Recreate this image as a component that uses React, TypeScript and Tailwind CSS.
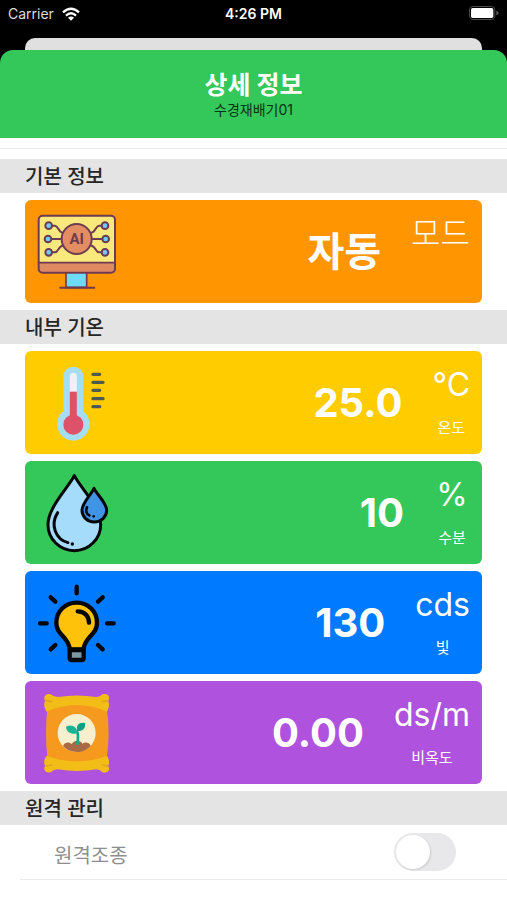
import type { ReactNode } from "react";

const AiMonitorIcon = () => (
  <svg viewBox="51 50 240 240" className="size-20 shrink-0" aria-hidden="true" strokeLinecap="round" strokeLinejoin="round">
    <rect x="138" y="230" width="62" height="46" fill="#6fdcf7" stroke="#6d3b52" strokeWidth="5" />
    <path d="M121 277h102" stroke="#6d3b52" strokeWidth="6" />
    <rect x="56" y="61" width="229" height="171" rx="12" fill="#f9e97d" />
    <path d="M56 202h229v18a12 12 0 0 1-12 12H68a12 12 0 0 1-12-12z" fill="#e08a63" />
    <path d="M56 202h229" stroke="#6d3b52" strokeWidth="5" />
    <rect x="56" y="61" width="229" height="171" rx="12" fill="none" stroke="#6d3b52" strokeWidth="6" />
    <g fill="none" stroke="#6d3b52" strokeWidth="6">
      <path d="M97 91h8c10 0 10 20 23 21M97 131h28M97 171h8c10 0 10-19 23-20" />
      <path d="M245 91h-8c-10 0-10 20-23 21M245 131h-28M245 171h-8c-10 0-10-19-23-20" />
    </g>
    <circle cx="170" cy="131" r="45" fill="#e58d62" stroke="#6d3b52" strokeWidth="6" />
    <g fill="#6fcdf3" stroke="#6d3b52" strokeWidth="6">
      <circle cx="86" cy="91" r="10" />
      <circle cx="84" cy="131" r="10" />
      <circle cx="86" cy="171" r="10" />
      <circle cx="255" cy="91" r="10" />
      <circle cx="257" cy="131" r="10" />
      <circle cx="255" cy="171" r="10" />
    </g>
    <text x="170" y="146" textAnchor="middle" fontFamily="Roboto, sans-serif" fontSize="45" fontWeight="700" fill="#6d3b52">AI</text>
  </svg>
);

const ThermometerIcon = () => (
  <svg viewBox="51 52 240 240" className="size-20 shrink-0" aria-hidden="true" strokeLinecap="round">
    <path d="M130 93a30 30 0 0 1 60 0v104a49 49 0 1 1-60 0z" fill="#a5def2" />
    <path d="M160 92v50" stroke="#f2f0f7" strokeWidth="21" />
    <path d="M149.500 138h21v75h-21z" fill="#dd5268" />
    <circle cx="160" cy="237" r="30" fill="#dd5268" />
    <path d="M219 86h20M219 110h30M219 134h20M219 159h30M219 183h20" stroke="#4f5a50" strokeWidth="10" />
  </svg>
);

const DropsIcon = () => (
  <svg viewBox="51 47 240 240" className="size-20 shrink-0" aria-hidden="true" strokeLinecap="round" strokeLinejoin="round" stroke="#050608">
    <path d="M163 55C145 91 84 150 84 202a79 78 0 0 0 158 0C242 150 181 91 163 55z" fill="#a6dcfb" strokeWidth="9" />
    <path d="M113 166c-24 38-5 80 31 90" fill="none" strokeWidth="9" />
    <circle cx="157" cy="260" r="5" fill="#050608" stroke="none" />
    <path d="M222 93c-8 18-36 43-36 66a37 35 0 0 0 74 0c0-23-30-48-38-66z" fill="#3f94e6" strokeWidth="9" />
    <path d="M201 150c-5 11-1 20 7 24" fill="none" strokeWidth="8" />
    <circle cx="221" cy="177" r="4" fill="#050608" stroke="none" />
  </svg>
);

const BulbIcon = () => (
  <svg viewBox="51 46 240 240" className="size-20 shrink-0" aria-hidden="true" strokeLinecap="round" strokeLinejoin="round" stroke="#050608">
    <path d="M170 57v20M92 89l14 13M248 89l-14 13M60 167h20M261 167h20M92 245l14-13M248 245l-14-13" strokeWidth="13" fill="none" />
    <path d="M170 105c-35 0-61 27-61 60 0 39 38 42 40 80h42c2-38 40-41 40-80 0-33-26-60-61-60z" fill="#ffc20a" strokeWidth="13" />
    <path d="M149 247h42v24q0 6-6 6h-30q-6 0-6-6z" fill="#7d979e" strokeWidth="13" />
    <path d="M173 131c22 0 34 16 34 34" fill="none" strokeWidth="13" />
  </svg>
);

const SoilBagIcon = () => (
  <svg viewBox="51 46 240 240" className="size-20 shrink-0" aria-hidden="true" strokeLinecap="round" strokeLinejoin="round">
    <path d="M83 85q88-34 176 0 14 82 0 165-88 30-176 0-10-83 0-165z" fill="#f6991f" />
    <path d="M92 50c-14-4-24 8-17 19-5 12-1 24 5 33 56-27 125-27 181 0 5-10 9-22 3-33 10-12-3-24-17-19q-8 9-18 8-58-9-116 0-12 0-21-8z" fill="#f3bd18" />
    <path d="M92 284c-14 4-24-8-17-19-5-12-2-22 5-31 56 22 125 22 181 0 6 10 9 20 3 31 10 12-3 24-17 19q-8-9-18-9-58 10-116 0-12 0-21 9z" fill="#f3bd18" />
    <path d="M78 69l17 3M264 69l-17 3M78 265l17-3M264 265l-17-3" stroke="#dfa51c" strokeWidth="5" />
    <circle cx="170" cy="166" r="57" fill="#f8efcf" />
    <path d="M129 205c5-14 21-12 26-6 9-13 26-12 32-1 10-7 21-3 25 6-20 25-62 25-83 1z" fill="#a86a45" />
    <path d="M172 199q4-22 0-36" stroke="#15a78c" strokeWidth="8" fill="none" />
    <path d="M172 167c-19 4-33-4-34-20 18-9 33 0 34 20z" fill="#1bb596" />
    <path d="M171 160c-3-19 7-27 24-24 2 17-7 25-24 24z" fill="#109e84" />
  </svg>
);

const WifiIcon = () => (
  <svg viewBox="0 0 54 42" className="h-3.5 w-[18px]" aria-label="Wi-Fi" fill="none" stroke="#fff" strokeWidth="7">
    <path d="M3 16q24-22 48 0M12 26q15-14 30 0" />
    <path d="M27 41l-9-9q9-7 18 0z" fill="#fff" stroke="none" />
  </svg>
);

const BatteryIcon = () => (
  <svg viewBox="0 0 90 42" className="h-3.5 w-[30px]" aria-label="Battery">
    <rect x="1.500" y="1.500" width="76" height="39" rx="10" fill="none" stroke="#4b4b4d" strokeWidth="3" />
    <rect x="6" y="6" width="67" height="30" rx="5" fill="#fff" />
    <path d="M82 14q7 3 7 7t-7 7z" fill="#5a5a5c" />
  </svg>
);

type Reading = { color: string; icon: ReactNode; value: string; unit: string; unitWeight?: string; label?: string };

const readings: Reading[] = [
  { color: "bg-[#ffcc00]", icon: <ThermometerIcon />, value: "25.0", unit: "°C", label: "온도" },
  { color: "bg-[#34c759]", icon: <DropsIcon />, value: "10", unit: "%", label: "수분" },
  { color: "bg-[#007aff]", icon: <BulbIcon />, value: "130", unit: "cds", label: "빛" },
  { color: "bg-[#af52de]", icon: <SoilBagIcon />, value: "0.00", unit: "ds/m", label: "비옥도" },
];

function ReadingCard({ color, icon, value, unit, unitWeight = "font-normal", label }: Reading) {
  return (
    <article className={`flex h-[103px] items-center rounded-md px-3 text-white ${color}`}>
      {icon}
      <p className="ml-auto text-[40px] leading-none font-bold">{value}</p>
      <div className="ml-[30px] flex h-full min-w-9 flex-col items-center pt-3">
        <span className={`text-[32px] leading-[44px] ${unitWeight}`}>{unit}</span>
        <span className="mt-[11px] text-[15px] leading-5">{label}</span>
      </div>
    </article>
  );
}

function SectionTitle({ children }: { children: ReactNode }) {
  return <h2 className="h-[34px] bg-[#e4e4e4] px-[25px] text-[20px] leading-9 font-medium text-[#262626]">{children}</h2>;
}

export default function App() {
  return (
    <div className="min-h-screen bg-white font-['Inter','Noto_Sans_CJK_KR',sans-serif]">
      <div className="bg-black">
        <div className="grid h-[38px] grid-cols-3 items-start px-2 pt-1.5 text-sm leading-4 text-white">
          <div className="flex items-center gap-2 text-[#dddddd]">
            <span>Carrier</span>
            <WifiIcon />
          </div>
          <time className="text-center font-semibold">4:26 PM</time>
          <div className="flex justify-end">
            <BatteryIcon />
          </div>
        </div>
        <div className="mx-[25px] h-3 rounded-t-[10px] bg-[#e0e0e0]" />
        <header className="h-[88px] rounded-t-[13px] bg-[#34c759] pt-5 text-center">
          <h1 className="text-[25px] leading-[30px] font-bold text-white">상세 정보</h1>
          <p className="text-sm leading-5 text-[#0b3014]">수경재배기01</p>
        </header>
      </div>
      <main>
        <div className="mt-2.5 mb-2.5 h-px bg-[#e9e9e9]" />
        <section>
          <SectionTitle>기본 정보</SectionTitle>
          <div className="px-[25px] py-[7px]">
            <ReadingCard color="bg-[#ff9500]" icon={<AiMonitorIcon />} value="자동" unit="모드" unitWeight="font-light" />
          </div>
        </section>
        <section>
          <SectionTitle>내부 기온</SectionTitle>
          <div className="flex flex-col gap-[7px] px-[25px] py-[7px]">
            {readings.map((reading) => (
              <ReadingCard key={reading.unit} {...reading} />
            ))}
          </div>
        </section>
        <section>
          <SectionTitle>원격 관리</SectionTitle>
          <div className="ml-5 flex h-[55px] items-center justify-between border-b border-[#e9e9e9] pr-[51px] pl-[34px]">
            <label htmlFor="remote" className="pt-2 text-[20px] leading-8 text-[#8e8e8e]">원격조종</label>
            <input
              id="remote"
              type="checkbox"
              role="switch"
              className="h-[38px] w-[62px] appearance-none rounded-full bg-[#e8e8ea] p-0.5 before:block before:size-[34px] before:rounded-full before:bg-white before:shadow-[1px_1px_2px_rgba(0,0,0,0.12)] before:content-[''] checked:bg-[#34c759] checked:before:ml-auto"
            />
          </div>
        </section>
      </main>
    </div>
  );
}
